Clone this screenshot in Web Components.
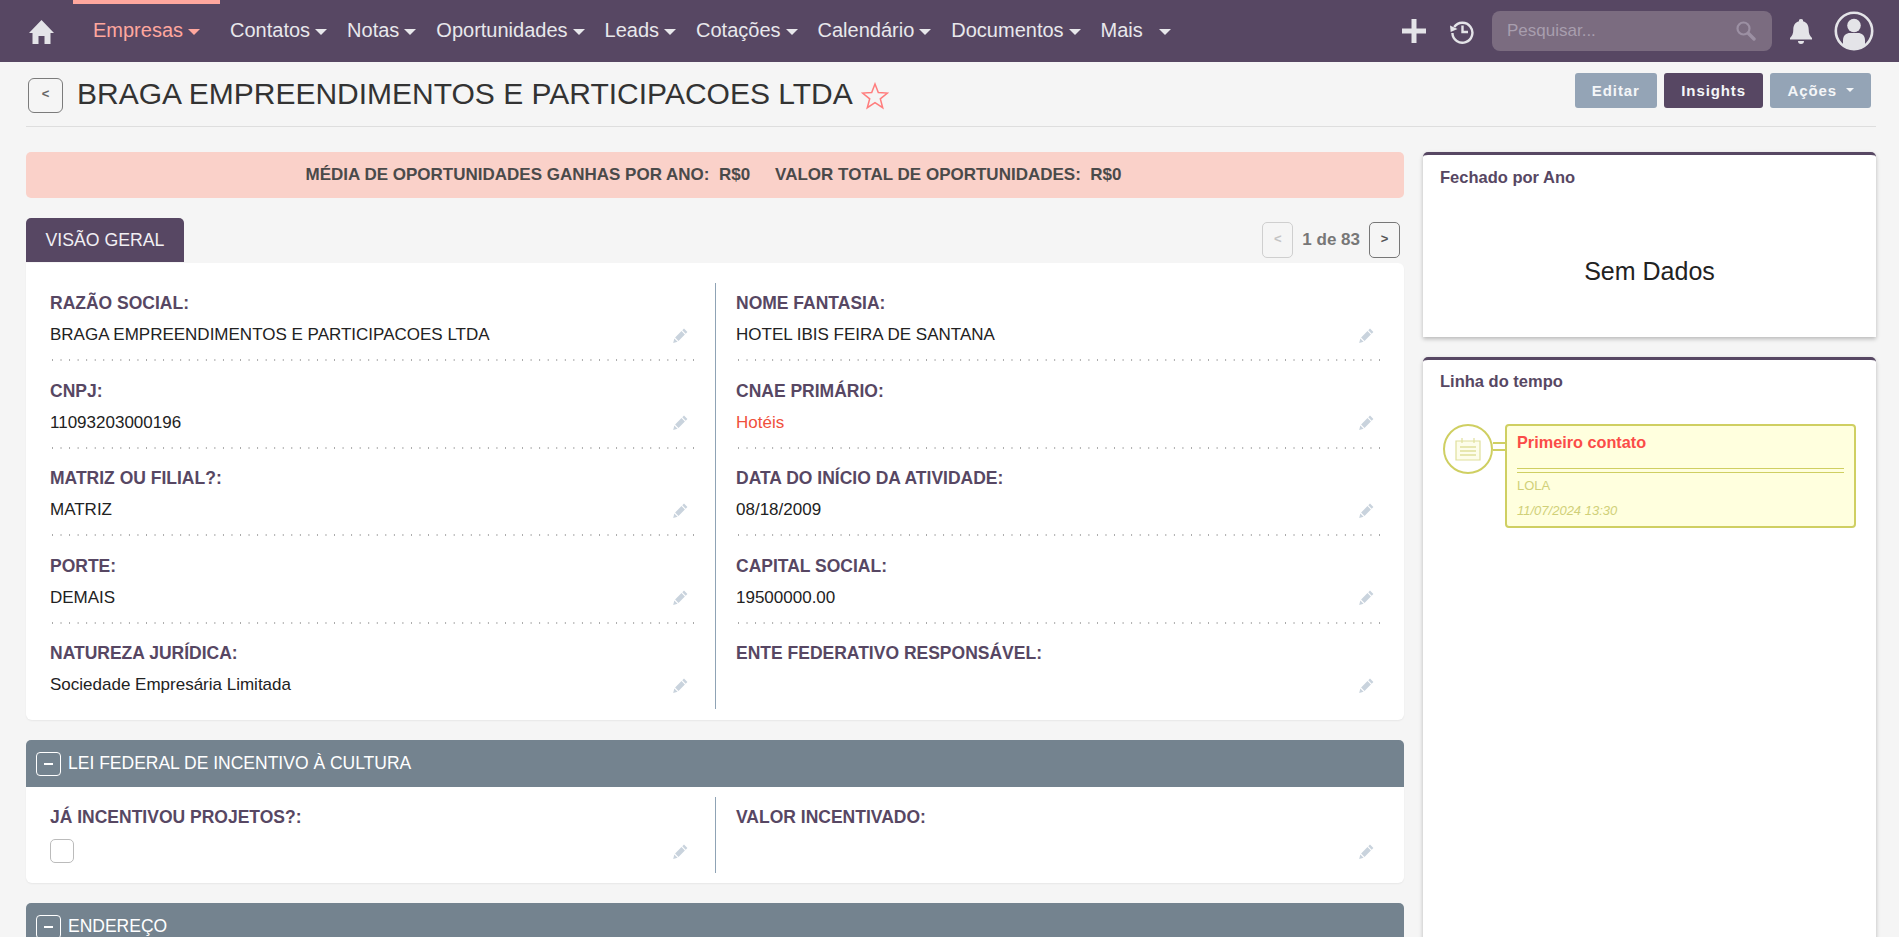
<!DOCTYPE html>
<html lang="pt-BR">
<head>
<meta charset="utf-8">
<title>Empresas</title>
<style>
html,body{margin:0;padding:0;height:937px;overflow:hidden;background:#f5f5f5;font-family:"Liberation Sans",Arial,sans-serif;color:#333}
</style>
</head>
<body>
<crm-nav></crm-nav>
<crm-header></crm-header>
<crm-layout>
  <crm-banner></crm-banner>
  <crm-tabbar></crm-tabbar>
  <crm-panel first>
    <crm-field label="RAZÃO SOCIAL:" value="BRAGA EMPREENDIMENTOS E PARTICIPACOES LTDA"></crm-field>
    <crm-field label="NOME FANTASIA:" value="HOTEL IBIS FEIRA DE SANTANA"></crm-field>
    <crm-field label="CNPJ:" value="11093203000196"></crm-field>
    <crm-field label="CNAE PRIMÁRIO:" value="Hotéis" link></crm-field>
    <crm-field label="MATRIZ OU FILIAL?:" value="MATRIZ"></crm-field>
    <crm-field label="DATA DO INÍCIO DA ATIVIDADE:" value="08/18/2009"></crm-field>
    <crm-field label="PORTE:" value="DEMAIS"></crm-field>
    <crm-field label="CAPITAL SOCIAL:" value="19500000.00"></crm-field>
    <crm-field label="NATUREZA JURÍDICA:" value="Sociedade Empresária Limitada" last></crm-field>
    <crm-field label="ENTE FEDERATIVO RESPONSÁVEL:" value="" last></crm-field>
  </crm-panel>
  <crm-section title="LEI FEDERAL DE INCENTIVO À CULTURA"></crm-section>
  <crm-panel>
    <crm-field label="JÁ INCENTIVOU PROJETOS?:" checkbox last compact></crm-field>
    <crm-field label="VALOR INCENTIVADO:" value="" last compact></crm-field>
  </crm-panel>
  <crm-section title="ENDEREÇO"></crm-section>
  <crm-chart slot="side"></crm-chart>
  <crm-timeline slot="side"></crm-timeline>
</crm-layout>

<script>
var PENCIL = '<svg width="15" height="15" viewBox="0 0 15 15"><path fill="#c9d3dd" d="M11 .6l3.400 3.400-1.700 1.700-3.400-3.400zM8.500 3.100l3.400 3.400-6.400 6.400-3.400-3.400zM1.300 10.400l3.300 3.300-4.400 1.200z"/></svg>';

class CrmNav extends HTMLElement {
  constructor(){
    super();
    this.attachShadow({mode:"open"});
    var items = [["Empresas",true],["Contatos"],["Notas"],["Oportunidades"],["Leads"],["Cotações"],["Calendário"],["Documentos"],["Mais"]];
    var links = items.map(function(i){
      return '<a class="'+(i[1]?'on':'')+(i[0]=="Mais"?' more':'')+'">'+i[0]+'<b></b></a>';
    }).join("");
    this.shadowRoot.innerHTML = `
    <style>
    :host{display:flex;align-items:center;height:62px;background:#574763;color:#e8e8ec;font-size:20px;padding-left:28px;box-sizing:border-box}
    .home{width:27px;height:27px;margin-right:18px;flex:none}
    nav{display:flex;align-items:center;height:62px}
    a{display:flex;align-items:center;height:62px;padding:0 10px 2px;white-space:nowrap;box-sizing:border-box}
    a b{width:0;height:0;border-left:6px solid transparent;border-right:6px solid transparent;border-top:6px solid currentColor;margin-left:5px;margin-top:3px}
    a.on{color:#ffa79e;position:relative;padding:0 20px 2px}
    a.on::before{content:"";position:absolute;left:0;right:0;top:0;height:4px;background:#ffa79e}
    a.more b{margin-left:16px}
    .right{margin-left:auto;display:flex;align-items:center;height:62px}
    .search{width:280px;height:40px;background:#7b6c80;border-radius:8px;display:flex;align-items:center;justify-content:space-between;padding:0 16px 0 15px;box-sizing:border-box;color:#a89eae;font-size:17px}
    svg{display:block;flex:none}
    </style>
    <svg class="home" viewBox="0 0 27 27"><path fill="#e4e4e8" d="M13.500 2L26 15h-3.500v11h-6v-8h-6v8h-6V15H1z"/></svg>
    <nav>${links}</nav>
    <div class="right">
      <svg width="26" height="26" viewBox="0 0 26 26" style="margin-right:22px"><path fill="#e4e4e8" d="M10.500 1h5v9.500H25v5h-9.500V25h-5v-9.500H1v-5h9.500z"/></svg>
      <svg width="26" height="26" viewBox="0 0 26 26" style="margin-right:17px"><path fill="none" stroke="#e4e4e8" stroke-width="2.400" d="M5.200 9A10 10 0 1 1 3.400 15"/><path fill="#e4e4e8" d="M1 7.500l7.500 3.500L1.700 14z"/><path fill="none" stroke="#e4e4e8" stroke-width="2.400" d="M13.500 7.500V14H19"/></svg>
      <div class="search"><span>Pesquisar...</span><svg width="20" height="20" viewBox="0 0 20 20"><circle cx="7.500" cy="7.500" r="6" fill="none" stroke="#9c90a3" stroke-width="2.200"/><path stroke="#9c90a3" stroke-width="3.400" stroke-linecap="round" d="M12.500 12.500l5.500 5.500"/></svg></div>
      <svg width="24" height="26" viewBox="0 0 24 26" style="margin:0 21px 0 17px"><path fill="#e4e4e8" d="M12 1a2 2 0 0 1 2 2.300c4 1 5.700 4.300 5.700 8.200 0 4 1 6.400 3.300 8.500v1.500H1V20c2.300-2.100 3.300-4.500 3.300-8.500 0-3.900 1.700-7.200 5.700-8.200A2 2 0 0 1 12 1zM9 23h6a3 3 0 0 1-6 0z"/></svg>
      <svg width="40" height="40" viewBox="0 0 40 40" style="margin-right:25px"><circle cx="20" cy="20" r="18.200" fill="none" stroke="#e4e4e8" stroke-width="2.600"/><circle cx="20" cy="14.500" r="6.800" fill="#e4e4e8"/><path fill="#e4e4e8" d="M9 35V29c0-4.500 3.500-7 7-7h8c3.500 0 7 2.500 7 7v6c-3 2.700-7 3.600-11 3.600S12 37.700 9 35z"/></svg>
    </div>`;
  }
}
customElements.define("crm-nav", CrmNav);

class CrmHeader extends HTMLElement {
  constructor(){
    super();
    this.attachShadow({mode:"open"});
    this.shadowRoot.innerHTML = `
    <style>
    :host{display:flex;align-items:center;height:64px;margin:0 23px 0 26px;border-bottom:1px solid #dedede;box-sizing:content-box;padding-left:2px}
    .back{width:35px;height:35px;box-sizing:border-box;border:1px solid #7b7b7b;border-radius:6px;display:flex;align-items:center;justify-content:center;font-size:13px;font-weight:bold;color:#666;margin-right:14px;padding-bottom:3px;margin-top:2px}
    h1{margin:0;font-weight:normal;font-size:30px;color:#333;white-space:nowrap}
    svg{margin-left:8px;margin-top:3px}
    .btns{margin-left:auto;display:flex;gap:7px;margin-right:5px;margin-top:-8px}
    .btn{height:35px;display:flex;align-items:center;padding:0 17px;border-radius:3px;background:#94a4b6;color:#f4f6f8;font-weight:bold;font-size:15px;letter-spacing:.9px;white-space:nowrap;box-sizing:border-box}
    .btn.p{background:#574763;padding:0 17.500px}
    .btn i{width:0;height:0;border-left:4px solid transparent;border-right:4px solid transparent;border-top:4px solid currentColor;margin-left:9px}
    </style>
    <div class="back">&lt;</div>
    <h1>BRAGA EMPREENDIMENTOS E PARTICIPACOES LTDA</h1>
    <svg width="28" height="28" viewBox="0 0 28 28"><path fill="none" stroke="#ff7d7d" stroke-width="1.500" d="M14 2l3.300 8.600 9.200.5-7.200 5.700 2.400 8.900L14 20.700l-7.700 5 2.400-8.900-7.200-5.700 9.200-.5z"/></svg>
    <div class="btns"><div class="btn">Editar</div><div class="btn p">Insights</div><div class="btn">Ações<i></i></div></div>`;
  }
}
customElements.define("crm-header", CrmHeader);

class CrmLayout extends HTMLElement {
  constructor(){
    super();
    this.attachShadow({mode:"open"});
    this.shadowRoot.innerHTML = `
    <style>
    :host{display:grid;grid-template-columns:1378px 453px;column-gap:19px;padding:25px 0 0 26px;align-items:start}
    .main{display:block;min-width:0}
    .side{display:flex;flex-direction:column;gap:20px}
    </style>
    <div class="main"><slot></slot></div>
    <div class="side"><slot name="side"></slot></div>`;
  }
}
customElements.define("crm-layout", CrmLayout);

class CrmBanner extends HTMLElement {
  constructor(){
    super();
    this.attachShadow({mode:"open"});
    this.shadowRoot.innerHTML = `
    <style>
    :host{display:flex;align-items:center;justify-content:center;gap:25px;height:46px;background:#fad1c9;border-radius:5px;font-size:17px;font-weight:bold;color:#4a4a4a;margin-bottom:20px;padding-right:3px}
    span{white-space:pre}
    </style>
    <span>MÉDIA DE OPORTUNIDADES GANHAS POR ANO:  R$0</span><span>VALOR TOTAL DE OPORTUNIDADES:  R$0</span>`;
  }
}
customElements.define("crm-banner", CrmBanner);

class CrmTabbar extends HTMLElement {
  constructor(){
    super();
    this.attachShadow({mode:"open"});
    this.shadowRoot.innerHTML = `
    <style>
    :host{display:flex;align-items:flex-start;height:45px}
    .tab{height:44px;width:158px;background:#574763;color:#f1eff3;font-size:17.700px;border-radius:5px 5px 0 0;display:flex;align-items:center;justify-content:center;box-sizing:border-box;padding-top:1px}
    .pager{display:flex;align-items:center;margin:4px 4px 0 auto;font-size:17px;font-weight:bold;color:#777}
    .b{width:31px;height:36px;box-sizing:border-box;border:1px solid #777;border-radius:5px;display:flex;align-items:center;justify-content:center;font-size:13px;color:#555;padding-bottom:4px}
    .b.off{border-color:#cfcfcf;color:#c4c4c4}
    span{margin:0 9px}
    </style>
    <div class="tab">VISÃO GERAL</div>
    <div class="pager"><div class="b off">&lt;</div><span>1 de 83</span><div class="b">&gt;</div></div>`;
  }
}
customElements.define("crm-tabbar", CrmTabbar);

class CrmPanel extends HTMLElement {
  constructor(){
    super();
    this.attachShadow({mode:"open"});
    this.shadowRoot.innerHTML = `
    <style>
    :host{display:block;background:#fff;border-radius:0 0 6px 6px;box-shadow:0 1px 2px rgba(0,0,0,.06);padding:10px 25px 10px 24px;margin-bottom:20px}
    :host([first]){padding-top:20px;padding-bottom:11px;border-radius:0 6px 6px 6px}
    .g{display:grid;grid-template-columns:643px 643px;column-gap:43px;position:relative}
    .g::before{content:"";position:absolute;left:665px;top:0;bottom:0;width:1px;background:#8fa3b5}
    ::slotted(*){min-width:0}
    </style>
    <div class="g"><slot></slot></div>`;
  }
}
customElements.define("crm-panel", CrmPanel);

class CrmField extends HTMLElement {
  constructor(){
    super();
    this.attachShadow({mode:"open"});
  }
  connectedCallback(){
    var v = this.getAttribute("value") || "";
    var body = this.hasAttribute("checkbox") ? '<div class="c"></div>' : '<span class="'+(this.hasAttribute("link")?"l":"")+'">'+v+'</span>';
    this.shadowRoot.innerHTML = `
    <style>
    :host{display:block;height:87.500px;box-sizing:border-box;padding-top:11px}
    :host([last]){height:76px}
    .t{font-size:17.500px;font-weight:bold;color:#574763;line-height:18px}
    .v{display:flex;justify-content:space-between;align-items:center;height:24px;margin-top:11px;font-size:17px;color:#222;padding-right:5px}
    :host([compact]) .v{margin-top:13px}
    .l{color:#f0503c}
    .d{height:2px;margin:12px -1px 0 2px;background:linear-gradient(to right,#a8a8a8 1px,transparent 1px) 0 0/8.550px 2px repeat-x}
    :host([last]) .d{display:none}
    .c{width:24px;height:24px;box-sizing:border-box;border:1px solid #bbb;border-radius:5px;background:#fff}
    svg{display:block}
    </style>
    <div class="t">${this.getAttribute("label")}</div>
    <div class="v">${body}${PENCIL}</div>
    <div class="d"></div>`;
  }
}
customElements.define("crm-field", CrmField);

class CrmSection extends HTMLElement {
  constructor(){
    super();
    this.attachShadow({mode:"open"});
  }
  connectedCallback(){
    this.shadowRoot.innerHTML = `
    <style>
    :host{display:flex;align-items:center;height:47px;background:#74838f;color:#fff;font-size:17.500px;border-radius:5px 5px 0 0;padding-left:10px;gap:7px;box-sizing:border-box}
    .m{width:25px;height:24px;box-sizing:border-box;border:1px solid #fff;border-radius:4px;display:flex;align-items:center;justify-content:center}
    .m i{width:9px;height:2px;background:#fff}
    </style>
    <div class="m"><i></i></div><span>${this.getAttribute("title")}</span>`;
  }
}
customElements.define("crm-section", CrmSection);

class CrmChart extends HTMLElement {
  constructor(){
    super();
    this.attachShadow({mode:"open"});
    this.shadowRoot.innerHTML = `
    <style>
    :host{display:block;height:185px;background:#fff;border-top:3px solid #574763;border-radius:5px 5px 0 0;box-shadow:0 2px 4px rgba(0,0,0,.25);box-sizing:border-box;padding:13px 17px}
    .h{font-size:16.500px;font-weight:bold;color:#574763}
    .e{text-align:center;font-size:25px;color:#222;margin-top:70px}
    </style>
    <div class="h">Fechado por Ano</div><div class="e">Sem Dados</div>`;
  }
}
customElements.define("crm-chart", CrmChart);

class CrmTimeline extends HTMLElement {
  constructor(){
    super();
    this.attachShadow({mode:"open"});
    this.shadowRoot.innerHTML = `
    <style>
    :host{display:block;height:700px;background:#fff;border-top:3px solid #574763;border-radius:5px 5px 0 0;box-shadow:0 2px 4px rgba(0,0,0,.25);box-sizing:border-box;padding:12px 17px}
    .h{font-size:16.500px;font-weight:bold;color:#574763}
    .row{display:flex;align-items:flex-start;margin-top:33px;padding-left:3px}
    .ic{width:50px;height:50px;box-sizing:border-box;border:2px solid #cfcf62;border-radius:50%;display:flex;align-items:center;justify-content:center;flex:none;background:#fff}
    .lk{width:12px;height:9px;margin-top:18px;box-sizing:border-box;border-top:2px solid #cfcf62;border-bottom:2px solid #cfcf62;flex:none}
    .card{width:351px;height:104px;box-sizing:border-box;background:#ffffde;border:2px solid #cfcf62;border-radius:4px;padding:7px 10px}
    .t{font-size:16.250px;font-weight:bold;color:#fb4c48}
    .s{height:3px;border-top:1px solid #cfcf62;border-bottom:1px solid #cfcf62;margin-top:16px}
    .w{font-size:13px;color:#d0d078;margin-top:5px}
    .d{font-size:13px;font-style:italic;color:#d0d078;margin-top:10px}
    </style>
    <div class="h">Linha do tempo</div>
    <div class="row">
      <div class="ic"><svg width="26" height="24" viewBox="0 0 26 24"><path fill="#fdfdea" stroke="#dfdf9c" stroke-width="1.200" d="M1 4h24v19H1z"/><path stroke="#dfdf9c" stroke-width="1.200" d="M7 1v5M19 1v5"/><path stroke="#dfdf9c" stroke-width="1.500" d="M5 10h16M5 14h16M5 18h16"/></svg></div>
      <div class="lk"></div>
      <div class="card">
        <div class="t">Primeiro contato</div>
        <div class="s"></div>
        <div class="w">LOLA</div>
        <div class="d">11/07/2024 13:30</div>
      </div>
    </div>`;
  }
}
customElements.define("crm-timeline", CrmTimeline);
</script>
</body>
</html>
